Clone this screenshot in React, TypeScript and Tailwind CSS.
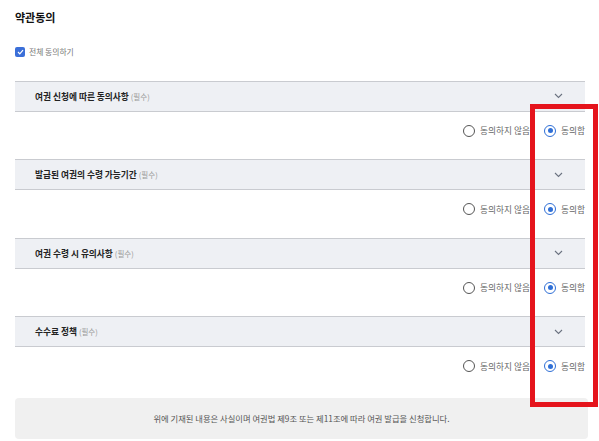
const sections = [
  '여권 신청에 따른 동의사항',
  '발급된 여권의 수령 가능기간',
  '여권 수령 시 유의사항',
  '수수료 정책',
];

function Chevron() {
  return (
    <svg width="9" height="6" viewBox="0 0 9 6" fill="none">
      <path d="M1 1l3.5 3.5L8 1" stroke="#6b7280" strokeWidth="1.1" />
    </svg>
  );
}

function Radio({ checked, label }: { checked: boolean; label: string }) {
  return (
    <label className="flex items-center gap-[5px]">
      <span
        className={`flex h-[12px] w-[12px] items-center justify-center rounded-full border ${
          checked ? 'border-[#2f6fd6]' : 'border-[#555]'
        } bg-white`}
      >
        {checked && <span className="h-[5px] w-[5px] rounded-full bg-[#2f6fd6]" />}
      </span>
      <span className="text-[8.7px] text-[#666]">{label}</span>
    </label>
  );
}

export default function App() {
  return (
    <div
      className="relative h-[441px] w-[599px] overflow-hidden bg-white pl-[15px] pr-[14px]"
      style={{ fontFamily: '"Noto Sans CJK KR", "Noto Sans", sans-serif' }}
    >
      <h1 className="pt-[7px] text-[11px] font-bold leading-[20px] text-[#111]">약관동의</h1>

      <div className="mt-[19px] flex items-center gap-[4px]">
        <span className="flex h-[10px] w-[10px] items-center justify-center rounded-[2px] bg-[#3b6fd8]">
          <svg width="7" height="6" viewBox="0 0 7 6" fill="none">
            <path d="M1 3l1.8 1.8L6 1.2" stroke="white" strokeWidth="1.2" />
          </svg>
        </span>
        <span className="text-[7.8px] text-[#777]">전체 동의하기</span>
      </div>

      <div className="mt-[23px] flex flex-col">
        {sections.map((title) => (
          <div key={title} className="flex flex-col">
            <div className="flex h-[31px] items-center justify-between border-y border-[#c9cbd0] bg-[#eef0f4] pl-[20px] pr-[22px]">
              <span className="text-[8.7px] font-bold text-[#222]">
                {title} <span className="text-[7.5px] font-normal text-[#999]">(필수)</span>
              </span>
              <Chevron />
            </div>
            <div className="flex h-[47.5px] items-center justify-end gap-[14px] pb-[9px]">
              <Radio checked={false} label="동의하지 않음" />
              <Radio checked label="동의함" />
            </div>
          </div>
        ))}
      </div>

      <div className="mt-[3px] flex h-[41px] w-[573px] items-center justify-center rounded-[4px] bg-[#f0f0f0]">
        <span className="text-[8.3px] text-[#555]">
          위에 기재된 내용은 사실이며 여권법 제9조 또는 제11조에 따라 여권 발급을 신청합니다.
        </span>
      </div>

      <div className="absolute left-[530px] top-[104px] h-[303px] w-[68px] border-[5px] border-[#e5141c]" />
    </div>
  );
}
